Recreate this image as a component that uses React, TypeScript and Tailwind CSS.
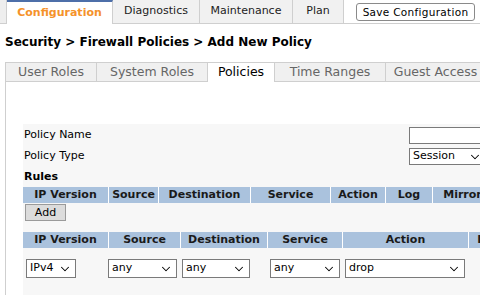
import { ChevronDown } from 'lucide-react';

const TOP_TABS = ['Configuration', 'Diagnostics', 'Maintenance', 'Plan'];
const SUB_TABS = ['User Roles', 'System Roles', 'Policies', 'Time Ranges', 'Guest Access'];

const RULE_COLS: [string, number][] = [
  ['IP Version', 85],
  ['Source', 50],
  ['Destination', 92],
  ['Service', 80],
  ['Action', 55],
  ['Log', 47],
  ['Mirror', 60],
];

const EDIT_COLS: [string, number][] = [
  ['IP Version', 85],
  ['Source', 72],
  ['Destination', 87],
  ['Service', 75],
  ['Action', 126],
  ['Log', 40],
];

function Select({ value, width }: { value: string; width: number }) {
  return (
    <div
      className="flex h-[19px] items-center justify-between border border-[#7a7a7a] bg-white pl-[3px] pr-[3px] text-[11px] text-black"
      style={{ width }}
    >
      <span>{value}</span>
      <ChevronDown size={14} strokeWidth={1.8} />
    </div>
  );
}

function HeaderRow({ cols }: { cols: [string, number][] }) {
  return (
    <div className="flex h-[16px] whitespace-nowrap">
      {cols.map(([label, w], i) => (
        <div
          key={label}
          className={
            'flex shrink-0 items-center justify-center overflow-hidden bg-[#aac2dd] text-[11px] font-bold text-[#1a1a1a]' +
            (i > 0 ? ' border-l border-white' : '')
          }
          style={{ width: w }}
        >
          {label}
        </div>
      ))}
    </div>
  );
}

export default function App() {
  return (
    <div
      className="h-[295px] w-[480px] overflow-hidden bg-white text-black"
      style={{ fontFamily: '"DejaVu Sans", Verdana, sans-serif' }}
    >
      {/* Top navigation */}
      <div className="flex h-[24px] items-stretch border-b border-[#cfcfcf]">
        <div className="w-[7px] border-r border-[#cfcfcf] bg-[#eeeeee]" />
        {TOP_TABS.map((t, i) => (
          <div
            key={t}
            className={
              'flex items-center justify-center border-r border-[#cfcfcf] text-[11px] ' +
              (i === 0
                ? 'mb-[-1px] w-[106px] border-t-2 border-t-[#4d6fa9] bg-white font-bold text-[#f5922a]'
                : 'bg-[#f1f1f1] text-[#222]')
            }
            style={i === 0 ? undefined : { width: [0, 87, 93, 51][i] }}
          >
            {t}
          </div>
        ))}
        <div className="flex flex-1 items-start justify-end pr-[5px] pt-[3px]">
          <button className="h-[18px] w-[119px] whitespace-nowrap rounded-[3px] border border-[#8a8a8a] bg-white p-0 text-[10.5px] leading-none tracking-[0.3px] text-black">
            Save Configuration
          </button>
        </div>
      </div>

      {/* Breadcrumb */}
      <div className="pl-[5px] pt-[10px] text-[12px] font-bold leading-[16px] text-black">
        Security &gt; Firewall Policies &gt; Add New Policy
      </div>

      {/* Sub tabs */}
      <div className="ml-[5px] mt-[12px] flex h-[20px] whitespace-nowrap">
        {SUB_TABS.map((t, i) => (
          <div
            key={t}
            className={
              'flex shrink-0 items-center justify-center border-r border-t border-[#cfcfcf] text-[12.5px] ' +
              (i === 2 ? 'bg-white text-black' : 'border-b bg-[#f0f0f0] text-[#666]') +
              (i === 0 ? ' border-l' : '')
            }
            style={{ width: [92, 111, 67, 111, 100][i] }}
          >
            {t}
          </div>
        ))}
      </div>

      {/* Panel */}
      <div className="ml-[5px] h-[220px] w-[520px] border-l border-[#cfcfcf] pl-[17px] pt-[42px]">
        <div className="h-full bg-[#f7f7f7] pt-[3px]">
          <div className="flex h-[17px] items-center text-[11px]">
            <span className="w-[386px] pl-[1px]">Policy Name</span>
            <div className="h-[17px] w-[80px] border border-[#7a7a7a] bg-white" />
          </div>
          <div className="mt-[4px] flex h-[17px] items-center text-[11px]">
            <span className="w-[386px] pl-[1px]">Policy Type</span>
            <div className="flex h-[17px] w-[80px] items-center justify-between border border-[#7a7a7a] bg-white pl-[3px] pr-[6px]">
              <span>Session</span>
              <ChevronDown size={14} strokeWidth={1.8} />
            </div>
          </div>
          <div className="mt-[5px] pl-[1px] text-[11px] font-bold leading-[13px]">Rules</div>
          <div className="mt-[4px]">
            <HeaderRow cols={RULE_COLS} />
          </div>
          <button className="ml-[2px] mt-[1px] block h-[17px] w-[41px] border border-[#9a9a9a] bg-[#dcdcdc] text-[11px] leading-none">
            Add
          </button>
          <div className="mt-[11px]">
            <HeaderRow cols={EDIT_COLS} />
          </div>
          <div className="mt-[11px] flex items-center">
            <div className="w-[85px] pl-[3px]">
              <Select value="IPv4" width={50} />
            </div>
            <div className="w-[74px]">
              <Select value="any" width={69} />
            </div>
            <div className="w-[87px]">
              <Select value="any" width={68} />
            </div>
            <div className="w-[75px] pl-[1px]">
              <Select value="any" width={70} />
            </div>
            <div className="w-[126px] pl-[1px]">
              <Select value="drop" width={120} />
            </div>
          </div>
        </div>
      </div>
    </div>
  );
}
